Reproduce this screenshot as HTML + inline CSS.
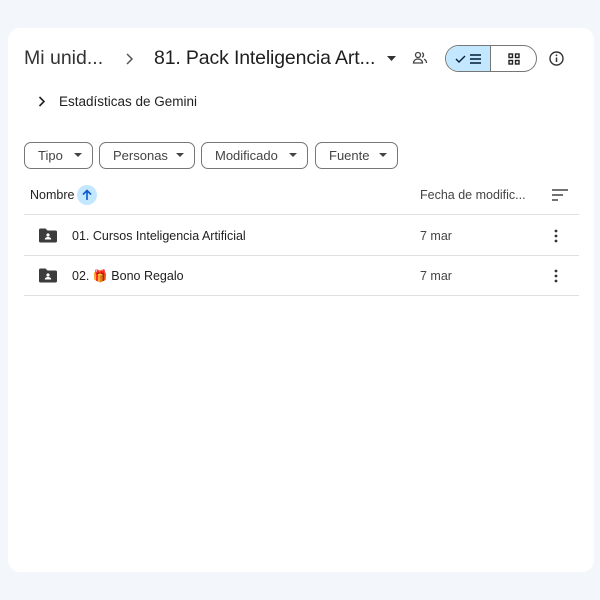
<!DOCTYPE html>
<html><head><meta charset="utf-8">
<style>
*{margin:0;padding:0;box-sizing:border-box}
body{width:600px;height:600px;background:#f3f7fb;font-family:"Liberation Sans",Arial,sans-serif;color:#1f1f1f;position:relative;overflow:hidden}
.card{position:absolute;left:8px;top:28px;width:586px;height:544px;background:#fff;border-radius:12px}
.abs{position:absolute;white-space:nowrap}
.chip{position:absolute;top:142px;height:27px;border:1px solid #747775;border-radius:7px;font-size:13px;color:#444;line-height:25px;padding-left:13px}
.chip svg{position:absolute;right:10px;top:10px}
.hr{position:absolute;left:24px;width:555px;height:1px;background:#e0e0e0}
.row{font-size:12.5px}
</style></head><body>
<div class="card"></div>
<div class="abs" style="left:24px;top:47px;font-size:19.5px;color:#333">Mi unid...</div>
<svg class="abs" style="left:124px;top:52px" width="10" height="14" viewBox="0 0 10 14"><path d="M3 2l5 5-5 5" fill="none" stroke="#555" stroke-width="1.5"/></svg>
<div class="abs" style="left:154px;top:47px;font-size:19.5px;color:#1f1f1f;letter-spacing:-0.15px">81. Pack Inteligencia Art...</div>
<svg class="abs" style="left:387px;top:56px" width="10" height="6"><path d="M0 0h9L4.5 5z" fill="#333"/></svg>
<svg class="abs" style="left:412px;top:50px" width="16" height="16" viewBox="0 0 16 16" fill="none" stroke="#444" stroke-width="1.3"><circle cx="6" cy="5" r="2.5"/><path d="M1.5 13c0-2.5 2-4 4.5-4s4.5 1.5 4.5 4z"/><path d="M10 2.7a2.5 2.5 0 010 4.6M12 9.3c1.5.5 2.5 1.8 2.5 3.7"/></svg>
<div class="abs" style="left:445px;top:45px;width:92px;height:27px;border:1px solid #747775;border-radius:14px;overflow:hidden">
 <div style="position:absolute;left:0;top:0;width:45px;height:27px;background:#c2e7ff;border-right:1px solid #747775"></div>
 <svg style="position:absolute;left:9px;top:7px" width="28" height="12"><path d="M1 6l3 3 6-6" fill="none" stroke="#001d35" stroke-width="1.4"/><path d="M15 2h11M15 6h11M15 10h11" stroke="#001d35" stroke-width="1.4"/></svg>
 <svg style="position:absolute;left:62px;top:7px" width="12" height="12"><g fill="none" stroke="#222" stroke-width="1.4"><rect x="1" y="1" width="3.5" height="3.5"/><rect x="7.5" y="1" width="3.5" height="3.5"/><rect x="1" y="7.5" width="3.5" height="3.5"/><rect x="7.5" y="7.5" width="3.5" height="3.5"/></g></svg>
</div>
<svg class="abs" style="left:549px;top:51px" width="15" height="15"><circle cx="7.5" cy="7.5" r="6.5" fill="none" stroke="#333" stroke-width="1.4"/><path d="M7.5 6.5v4.5" stroke="#333" stroke-width="1.5"/><circle cx="7.5" cy="4.3" r="0.9" fill="#333"/></svg>
<svg class="abs" style="left:38px;top:96px" width="8" height="11"><path d="M1.5 1l4.5 4.5-4.5 4.5" fill="none" stroke="#222" stroke-width="1.6"/></svg>
<div class="abs" style="left:59px;top:94px;font-size:13.5px">Estadísticas de Gemini</div>
<div class="chip" style="left:24px;width:69px">Tipo<svg width="8" height="5"><path d="M0 0h8L4 4z" fill="#444"/></svg></div>
<div class="chip" style="left:99px;width:96px">Personas<svg width="8" height="5"><path d="M0 0h8L4 4z" fill="#444"/></svg></div>
<div class="chip" style="left:201px;width:107px">Modificado<svg width="8" height="5"><path d="M0 0h8L4 4z" fill="#444"/></svg></div>
<div class="chip" style="left:315px;width:83px">Fuente<svg width="8" height="5"><path d="M0 0h8L4 4z" fill="#444"/></svg></div>
<div class="abs" style="left:30px;top:188px;font-size:12.5px">Nombre</div>
<div class="abs" style="left:77px;top:185px;width:20px;height:20px;border-radius:50%;background:#c2e7ff"></div>
<svg class="abs" style="left:81px;top:189px" width="12" height="12"><path d="M6 11V2M2 5.5L6 1.5l4 4" fill="none" stroke="#0b57d0" stroke-width="1.6"/></svg>
<div class="abs" style="left:420px;top:188px;font-size:12.5px;color:#444">Fecha de modific...</div>
<svg class="abs" style="left:552px;top:189px" width="16" height="12"><path d="M0 1h16M0 6h11M0 11h6" stroke="#444" stroke-width="1.5"/></svg>
<div class="hr" style="top:214px"></div>
<div class="hr" style="top:255px"></div>
<div class="hr" style="top:295px"></div>
<svg class="abs" style="left:39px;top:228px" width="18" height="15"><path d="M0 2a1.5 1.5 0 011.5-1.5h5l2 2h8A1.5 1.5 0 0118 4v9a1.5 1.5 0 01-1.5 1.5h-15A1.5 1.5 0 010 13z" fill="#3c3c3c"/><circle cx="9" cy="7" r="1.6" fill="#fff"/><path d="M5.8 11.5c0-1.7 1.5-2.5 3.2-2.5s3.2.8 3.2 2.5z" fill="#fff"/></svg>
<svg class="abs" style="left:39px;top:268px" width="18" height="15"><path d="M0 2a1.5 1.5 0 011.5-1.5h5l2 2h8A1.5 1.5 0 0118 4v9a1.5 1.5 0 01-1.5 1.5h-15A1.5 1.5 0 010 13z" fill="#3c3c3c"/><circle cx="9" cy="7" r="1.6" fill="#fff"/><path d="M5.8 11.5c0-1.7 1.5-2.5 3.2-2.5s3.2.8 3.2 2.5z" fill="#fff"/></svg>
<div class="abs row" style="left:72px;top:229px">01. Cursos Inteligencia Artificial</div>
<div class="abs row" style="left:72px;top:269px">02. <span style="font-size:12px;color:#e33">🎁</span> Bono Regalo</div>
<div class="abs row" style="left:420px;top:229px;color:#444">7 mar</div>
<div class="abs row" style="left:420px;top:269px;color:#444">7 mar</div>
<svg class="abs" style="left:554px;top:229px" width="4" height="14"><circle cx="2" cy="2" r="1.4" fill="#333"/><circle cx="2" cy="7" r="1.4" fill="#333"/><circle cx="2" cy="12" r="1.4" fill="#333"/></svg>
<svg class="abs" style="left:554px;top:269px" width="4" height="14"><circle cx="2" cy="2" r="1.4" fill="#333"/><circle cx="2" cy="7" r="1.4" fill="#333"/><circle cx="2" cy="12" r="1.4" fill="#333"/></svg>
</body></html>
